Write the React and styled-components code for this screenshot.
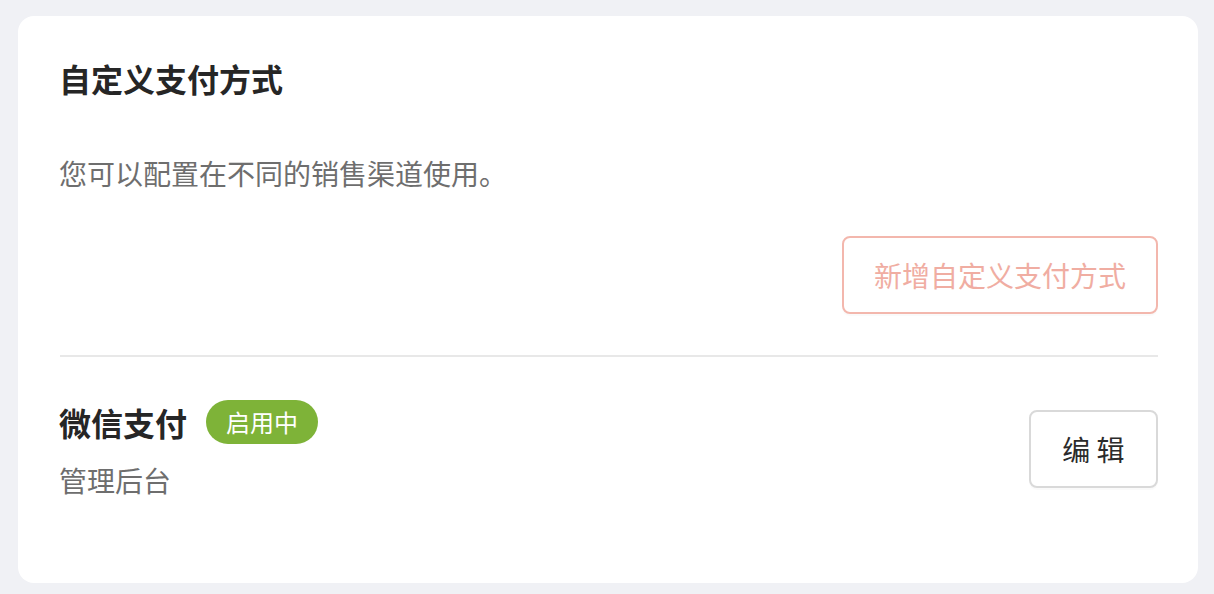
import React from 'react'
import styled, { createGlobalStyle } from 'styled-components'

const GlobalStyle = createGlobalStyle`
  html, body {
    margin: 0;
    padding: 0;
    background: #f0f1f5;
  }
  body {
    font-family: "Noto Sans CJK SC", "Noto Sans", sans-serif;
  }
`

const Page = styled.div`
  padding: 16px 16px 12px 18px;
  min-height: 594px;
  box-sizing: border-box;
`

const Card = styled.section`
  background: #fff;
  border-radius: 16px;
  padding: 42px 40px 85px 42px;
  display: flex;
  flex-direction: column;
`

const Title = styled.h2`
  margin: 0 0 0 -1px;
  font-size: 32px;
  line-height: 40px;
  font-weight: 700;
  color: #262626;
`

const Desc = styled.p`
  margin: 57px 0 0 -1px;
  font-size: 28px;
  line-height: 36px;
  color: #6e6e6e;
`

const Actions = styled.div`
  display: flex;
  justify-content: flex-end;
  margin-top: 45px;
`

const Button = styled.button`
  font-family: inherit;
  font-size: 28px;
  line-height: 36px;
  height: 78px;
  padding: 0 ${({ $pad }) => $pad}px;
  background: #fff;
  border-radius: 8px;
  border: 2px solid ${({ $tone }) => ($tone === 'primary' ? '#f3b7ad' : '#d9d9d9')};
  color: ${({ $tone }) => ($tone === 'primary' ? '#f0ada2' : '#2b2b2b')};
  box-shadow: 0 2px 0 rgba(0, 0, 0, 0.02);
  cursor: pointer;
`

const Divider = styled.hr`
  margin: 41px 0 0;
  border: 0;
  height: 2px;
  background: #e8e8e8;
`

const Row = styled.div`
  margin-top: 43px;
  display: flex;
  align-items: center;
  justify-content: space-between;
`

const Info = styled.div`
  display: flex;
  flex-direction: column;
  margin-left: -1px;
`

const NameLine = styled.div`
  display: flex;
  align-items: center;
  gap: 19px;
  height: 44px;
`

const Name = styled.span`
  font-size: 32px;
  font-weight: 700;
  color: #262626;
  line-height: 44px;
`

const Badge = styled.span`
  height: 44px;
  padding: 0 20px;
  border-radius: 22px;
  background: #7eb338;
  color: #fff;
  font-size: 24px;
  line-height: 44px;
`

const Sub = styled.span`
  margin-top: 18px;
  font-size: 28px;
  line-height: 36px;
  color: #6e6e6e;
`

const methods = [{ name: '微信支付', status: '启用中', channel: '管理后台' }]

const App = () => {
  return (
    <Page>
      <GlobalStyle />
      <Card>
        <Title>自定义支付方式</Title>
        <Desc>您可以配置在不同的销售渠道使用。</Desc>
        <Actions>
          <Button $tone="primary" $pad={30}>新增自定义支付方式</Button>
        </Actions>
        <Divider />
        {methods.map((m) => (
          <Row key={m.name}>
            <Info>
              <NameLine>
                <Name>{m.name}</Name>
                <Badge>{m.status}</Badge>
              </NameLine>
              <Sub>{m.channel}</Sub>
            </Info>
            <Button $pad={31.5}>编 辑</Button>
          </Row>
        ))}
      </Card>
    </Page>
  )
}

export default App
